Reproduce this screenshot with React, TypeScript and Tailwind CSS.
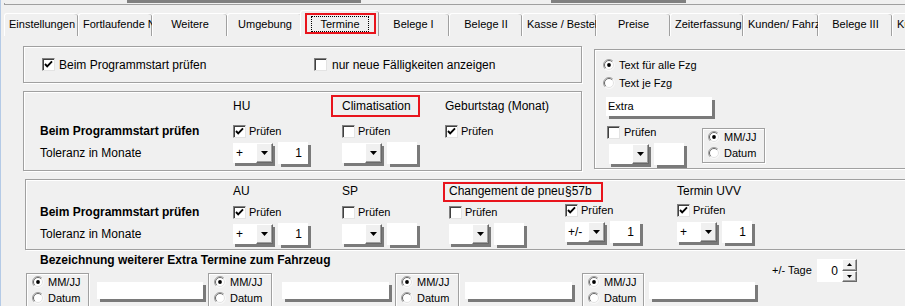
import React from 'react';

type Tab = { label: string; w: string; active?: boolean };

const tabs: Tab[] = [
  { label: 'Einstellungen', w: 'w-[74px]' },
  { label: 'Fortlaufende Nummern', w: 'w-[74px]' },
  { label: 'Weitere', w: 'w-[75px]' },
  { label: 'Umgebung', w: 'w-[75px]' },
  { label: 'Termine', w: 'w-[79px]', active: true },
  { label: 'Belege I', w: 'w-[72px]' },
  { label: 'Belege II', w: 'w-[73px]' },
  { label: 'Kasse / Bestellung', w: 'w-[74px]' },
  { label: 'Preise', w: 'w-[74px]' },
  { label: 'Zeiterfassung', w: 'w-[73px]' },
  { label: 'Kunden/ Fahrzeuge', w: 'w-[75px]' },
  { label: 'Belege III', w: 'w-[74px]' },
  { label: 'Kunden / Lieferanten', w: 'w-[74px]' },
];

const groupBox = 'border border-[#a0a0a0] shadow-[inset_1px_1px_0_#fff,1px_1px_0_#fff]';

function Check({ checked = false }: { checked?: boolean }) {
  return (
    <span className="inline-flex size-[13px] shrink-0 items-center justify-center border border-t-[#808080] border-l-[#808080] border-r-[#e3e3e3] border-b-[#e3e3e3] bg-white shadow-[inset_1px_1px_0_#404040]">
      {checked && (
        <svg width="9" height="9" viewBox="0 0 9 9">
          <polyline points="1,4 3.2,6.4 8,1.4" fill="none" stroke="#000" strokeWidth="1.9" />
        </svg>
      )}
    </span>
  );
}

function Radio({ checked = false }: { checked?: boolean }) {
  return (
    <svg width="12" height="12" viewBox="0 0 12 12" className="shrink-0">
      <circle cx="6" cy="6" r="5.5" fill="#fff" />
      <path d="M9.9 2.1 A5.5 5.5 0 0 0 2.1 9.9" stroke="#a0a0a0" fill="none" />
      <path d="M2.1 9.9 A5.5 5.5 0 0 0 9.9 2.1" stroke="#f8f8f8" fill="none" />
      <path d="M9.2 2.8 A4.5 4.5 0 0 0 2.8 9.2" stroke="#696969" fill="none" />
      <path d="M2.8 9.2 A4.5 4.5 0 0 0 9.2 2.8" stroke="#e3e3e3" fill="none" />
      {checked && <circle cx="6" cy="6" r="1.9" fill="#000" />}
    </svg>
  );
}

function CheckLabel({ checked, label = 'Prüfen', className = '' }: { checked?: boolean; label?: string; className?: string }) {
  return (
    <div className={`flex items-center gap-[3px] text-[11px] leading-[13px] ${className}`}>
      <Check checked={checked} />
      <span>{label}</span>
    </div>
  );
}

function RadioLabel({ checked, label, className = '' }: { checked?: boolean; label: string; className?: string }) {
  return (
    <div className={`flex h-[12px] items-center gap-[4px] text-[11px] leading-[12px] ${className}`}>
      <Radio checked={checked} />
      <span>{label}</span>
    </div>
  );
}

function Combo({ text = '' }: { text?: string }) {
  return (
    <div className="flex h-[20px] shrink-0 shadow-[2px_3px_0_#7a7a7a]">
      <div className="flex w-[23px] items-center bg-white pl-[3px] text-[12px] leading-[12px]">{text}</div>
      <div className="flex w-[17px] items-center justify-center border border-t-white border-l-white border-r-[#696969] border-b-[#696969] bg-[#f0f0f0] shadow-[inset_-1px_-1px_0_#a0a0a0]">
        <svg width="7" height="4" viewBox="0 0 7 4">
          <path d="M0 0h7L3.5 4z" fill="#000" />
        </svg>
      </div>
    </div>
  );
}

function NumEdit({ text = '' }: { text?: string }) {
  return (
    <div className="ml-[5px] flex h-[22px] w-[30px] shrink-0 items-center justify-end bg-white pr-[6px] text-[12px] shadow-[3px_3px_0_#7a7a7a]">
      {text}
    </div>
  );
}

function Tolerance({ sign = '', value = '' }: { sign?: string; value?: string }) {
  return (
    <div className="flex items-center">
      <Combo text={sign} />
      <NumEdit text={value} />
    </div>
  );
}

function DateMode({ className = '' }: { className?: string }) {
  return (
    <div className={`${groupBox} flex shrink-0 flex-col gap-[4px] pl-[5px] pt-[2px] ${className}`}>
      <RadioLabel checked label="MM/JJ" />
      <RadioLabel label="Datum" />
    </div>
  );
}

function TabBar() {
  return (
    <div className="flex h-[31px] items-start pl-[4px]">
      {tabs.map((t) =>
        t.active ? (
          <div
            key={t.label}
            className={`${t.w} relative z-10 -mx-[2px] mt-[5px] flex h-[26px] shrink-0 items-center justify-center rounded-t-[3px] border-l border-t border-white border-r-[#696969] bg-[#f0f0f0] text-[11px] shadow-[inset_-1px_0_0_#a0a0a0]`}
          >
            <span className="border border-dotted border-black px-[8px] leading-[14px]">{t.label}</span>
            <div className="absolute left-[4px] top-[2px] h-[21px] w-[71px] border-2 border-[#e8141c]" />
          </div>
        ) : (
          <div
            key={t.label}
            className={`${t.w} mt-[8px] h-[23px] shrink-0 overflow-hidden whitespace-nowrap rounded-t-[3px] border-l border-t border-white border-r-[#696969] px-[4px] text-center text-[11px] leading-[21px] shadow-[inset_-1px_0_0_#a0a0a0]`}
          >
            {t.label}
          </div>
        ),
      )}
    </div>
  );
}

export default function App() {
  return (
    <div className="relative h-[306px] w-[905px] overflow-hidden bg-[#f0f0f0] font-['Liberation_Sans',Arial,sans-serif] text-black shadow-[inset_1px_0_0_#b4cae6]">
      {/* strip of the window above */}
      <div className="flex h-[3px]">
        <div className="w-[127px]" />
        <div className="w-[234px] bg-[#808080]" />
        <div className="w-[190px]" />
        <div className="w-[135px] bg-[#808080]" />
      </div>
      <div className="ml-[4px] h-[2px] border-b border-l border-[#a0a0a0]" />

      <TabBar />

      <div className="flex flex-col pt-[10px]">
        <div className="flex items-start">
          <div className="ml-[23px] flex w-[559px] shrink-0 flex-col">
            {/* Box 1 */}
            <div className={`${groupBox} flex h-[37px] items-center pl-[18px] text-[12px]`}>
              <div className="flex w-[272px] items-center gap-[4px]">
                <Check checked />
                <span>Beim Programmstart prüfen</span>
              </div>
              <div className="flex items-center gap-[5px]">
                <Check />
                <span>nur neue Fälligkeiten anzeigen</span>
              </div>
            </div>

            {/* Box 2 */}
            <div className={`${groupBox} mt-[8px] flex h-[80px] flex-col pl-[16px] pt-[6px] text-[12px]`}>
              <div className="flex h-[16px] items-center leading-[16px]">
                <div className="w-[193px]" />
                <div className="w-[109px]">HU</div>
                <div className="relative w-[103px]">
                  Climatisation
                  <div className="absolute -left-[11px] -top-[3px] h-[22px] w-[89px] border-2 border-[#e8141c]" />
                </div>
                <div className="whitespace-nowrap">Geburtstag (Monat)</div>
              </div>
              <div className="mt-[10px] flex h-[14px] items-center">
                <div className="w-[193px] font-bold">Beim Programmstart prüfen</div>
                <CheckLabel checked className="w-[109px]" />
                <CheckLabel className="w-[103px]" />
                <CheckLabel checked />
              </div>
              <div className="mt-[4px] flex h-[22px] items-center">
                <div className="w-[193px]">Toleranz in Monate</div>
                <div className="w-[109px]">
                  <Tolerance sign="+" value="1" />
                </div>
                <div className="w-[103px]">
                  <Tolerance />
                </div>
              </div>
            </div>
          </div>

          {/* Box 4 */}
          <div className={`${groupBox} ml-[12px] mt-[3px] flex h-[120px] w-[340px] shrink-0 flex-col pl-[8px] pt-[9px]`}>
            <RadioLabel checked label="Text für alle Fzg" />
            <RadioLabel label="Text je Fzg" className="mt-[6px]" />
            <div className="ml-[3px] mt-[8px] flex h-[19px] w-[106px] items-center bg-white pl-[2px] text-[11px] shadow-[3px_3px_0_#7a7a7a]">
              Extra
            </div>
            <div className="mt-[10px] flex items-start">
              <div className="ml-[4px] flex w-[95px] flex-col">
                <CheckLabel className="gap-[4px]" />
                <div className="ml-[2px] mt-[4px] flex items-center">
                  <Combo />
                  <NumEdit />
                </div>
              </div>
              <DateMode className="mt-[2px] h-[35px] w-[63px]" />
            </div>
          </div>
        </div>

        {/* Box 3 */}
        <div className={`${groupBox} ml-[25px] mt-[8px] flex h-[71px] w-[900px] shrink-0 flex-col pl-[14px] pt-[3px] text-[12px]`}>
          <div className="flex h-[16px] items-center leading-[16px]">
            <div className="w-[193px]" />
            <div className="w-[109px]">AU</div>
            <div className="w-[107px]">SP</div>
            <div className="relative w-[116px] whitespace-nowrap">
              Changement de pneu
              <div className="absolute -left-[6px] -top-[1px] h-[20px] w-[160px] border-2 border-[#e8141c]" />
            </div>
            <div className="w-[112px]">§57b</div>
            <div className="whitespace-nowrap">Termin UVV</div>
          </div>
          <div className="mt-[6px] flex h-[14px] items-center">
            <div className="w-[193px] font-bold">Beim Programmstart prüfen</div>
            <CheckLabel checked className="w-[109px]" />
            <CheckLabel className="w-[107px]" />
            <CheckLabel className="w-[116px]" />
            <CheckLabel checked className="-mt-[4px] w-[112px]" />
            <CheckLabel checked className="-mt-[4px]" />
          </div>
          <div className="mt-[4px] flex h-[22px] items-center">
            <div className="w-[193px]">Toleranz in Monate</div>
            <div className="w-[109px]">
              <Tolerance sign="+" value="1" />
            </div>
            <div className="w-[107px]">
              <Tolerance />
            </div>
            <div className="w-[116px]">
              <Tolerance />
            </div>
            <div className="-mt-[4px] w-[112px]">
              <Tolerance sign="+/-" value="1" />
            </div>
            <div className="-mt-[4px]">
              <Tolerance sign="+" value="1" />
            </div>
          </div>
        </div>

        {/* Extra Termine */}
        <div className="flex items-start">
          <div className="flex w-[772px] shrink-0 flex-col">
            <div className="ml-[40px] mt-[3px] text-[12px] font-bold leading-[14px]">
              Bezeichnung weiterer Extra Termine zum Fahrzeug
            </div>
            <div className="mt-[6px] flex items-start">
              <DateMode className="ml-[26px] h-[40px] w-[63px]" />
              <div className="ml-[8px] mt-[9px] h-[17px] w-[106px] shrink-0 bg-white shadow-[3px_3px_0_#7a7a7a]" />
              <DateMode className="ml-[5px] h-[40px] w-[64px]" />
              <div className="ml-[10px] mt-[9px] h-[17px] w-[107px] shrink-0 bg-white shadow-[3px_3px_0_#7a7a7a]" />
              <DateMode className="ml-[6px] h-[40px] w-[64px]" />
              <div className="ml-[6px] mt-[9px] h-[17px] w-[107px] shrink-0 bg-white shadow-[3px_3px_0_#7a7a7a]" />
              <DateMode className="ml-[10px] h-[40px] w-[62px]" />
              <div className="ml-[5px] mt-[9px] h-[17px] w-[106px] shrink-0 bg-white shadow-[3px_3px_0_#7a7a7a]" />
            </div>
          </div>
          <div className="mt-[9px] flex items-center">
            <div className="w-[45px] text-[11px]">+/- Tage</div>
            <div className="flex h-[23px] w-[25px] items-center justify-end bg-white pr-[4px] text-[12px]">0</div>
            <div className="flex h-[23px] w-[15px] flex-col">
              {[0, 1].map((i) => (
                <div
                  key={i}
                  className="flex flex-1 items-center justify-center border border-t-white border-l-white border-r-[#696969] border-b-[#696969] bg-[#f0f0f0] shadow-[inset_-1px_-1px_0_#a0a0a0]"
                >
                  <svg width="5" height="3" viewBox="0 0 5 3">
                    <path d={i === 0 ? 'M0 3h5L2.5 0z' : 'M0 0h5L2.5 3z'} fill="#000" />
                  </svg>
                </div>
              ))}
            </div>
          </div>
        </div>
      </div>
    </div>
  );
}
